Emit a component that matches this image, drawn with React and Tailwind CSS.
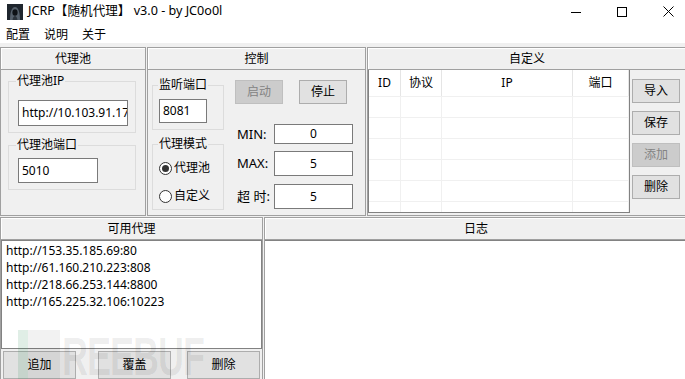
import React from "react";

const FONT = "font-['Noto_Sans','Noto_Sans_CJK_SC',sans-serif]";

function Btn({ children, disabled, className = "" }) {
  return (
    <div
      className={`flex items-center justify-center border text-[12px] leading-none ${
        disabled
          ? "bg-[#cccccc] border-[#bfbfbf] text-[#838383]"
          : "bg-[#e1e1e1] border-[#adadad] text-black"
      } ${className}`}
    >
      {children}
    </div>
  );
}

function Header({ title }) {
  return (
    <div className="h-[22px] shrink-0 border-b border-[#a0a0a0] shadow-[inset_1px_1px_0_#ffffff] flex items-center justify-center text-[12px] leading-none">
      {title}
    </div>
  );
}

function Field({ value, center, className = "" }) {
  return (
    <div
      className={`bg-white border border-[#7a7a7a] flex items-center overflow-hidden whitespace-nowrap text-[12px] leading-none ${
        center ? "justify-center" : "pl-[3px]"
      } ${className}`}
    >
      {value}
    </div>
  );
}

function Radio({ checked, label }) {
  return (
    <div className="h-[20px] flex items-center">
      <span className="w-[13px] h-[13px] rounded-full border border-[#333333] bg-white flex items-center justify-center">
        {checked && <span className="w-[7px] h-[7px] rounded-full bg-[#333333]" />}
      </span>
      <span className="ml-[2px] text-[12px] leading-none">{label}</span>
    </div>
  );
}

function Logo() {
  return (
    <svg width="16" height="16" viewBox="0 0 16 16" className="ml-[7px] shrink-0">
      <rect width="16" height="16" fill="#1f262e" />
      <path d="M3 16 C3 9 4.5 3 8 3 C11.5 3 13 9 13 16 Z" fill="#55606b" />
      <ellipse cx="8" cy="8.5" rx="2.6" ry="3.2" fill="#0e1216" />
      <path d="M5.5 16 C6 13 7 12 8 12 C9 12 10 13 10.5 16 Z" fill="#2c343c" />
    </svg>
  );
}

const proxies = [
  "http://153.35.185.69:80",
  "http://61.160.210.223:808",
  "http://218.66.253.144:8800",
  "http://165.225.32.106:10223",
];

const cols = ["ID", "协议", "IP", "端口"];

export default function App() {
  return (
    <div className={`relative w-[685px] h-[379px] overflow-hidden bg-white text-black ${FONT}`}>
      {/* title bar */}
      <div className="h-[23px] flex items-center">
        <Logo />
        <span className="ml-[5px] text-[12.6px] leading-none whitespace-nowrap">
          JCRP【随机代理】 v3.0 - by JC0o0l
        </span>
        <div className="ml-auto -mr-[6px] flex shrink-0">
          <div className="w-[46px] h-[23px] flex items-center justify-center">
            <svg width="10" height="10" viewBox="0 0 10 10">
              <path d="M0 5.5H10" stroke="#000" strokeWidth="1" />
            </svg>
          </div>
          <div className="w-[46px] h-[23px] flex items-center justify-center">
            <svg width="10" height="10" viewBox="0 0 10 10">
              <rect x="0.5" y="0.5" width="9" height="9" fill="none" stroke="#000" strokeWidth="1" />
            </svg>
          </div>
          <div className="w-[46px] h-[23px] flex items-center justify-center">
            <svg width="11" height="11" viewBox="0 0 11 11">
              <path d="M0.5 0.5L10.5 10.5M10.5 0.5L0.5 10.5" stroke="#000" strokeWidth="1" />
            </svg>
          </div>
        </div>
      </div>

      {/* menu */}
      <div className="h-[20px] pt-[4px] flex items-center gap-[14px] pl-[6px] text-[12px] leading-none">
        <span>配置</span>
        <span>说明</span>
        <span>关于</span>
      </div>

      {/* main */}
      <div className="bg-[#f0f0f0] h-[336px] pt-[4px]">
        <div className="h-[169px] flex gap-[1px]">
          {/* 代理池 */}
          <div className="w-[146px] shrink-0 border border-[#a0a0a0] flex flex-col">
            <Header title="代理池" />
            <fieldset className="ml-[7px] mt-[4px] w-[128px] border border-[#dcdcdc] pl-[9px] pt-[12px] pb-[6px]">
              <legend className="-ml-[2px] px-[1px] text-[12px] leading-[14px]">代理池IP</legend>
              <Field value="http://10.103.91.175" className="w-[110px] h-[26px]" />
            </fieldset>
            <fieldset className="ml-[7px] mt-[5px] w-[128px] border border-[#dcdcdc] pl-[9px] pt-[6px] pb-[6px]">
              <legend className="-ml-[2px] px-[1px] text-[12px] leading-[14px]">代理池端口</legend>
              <Field value="5010" className="w-[80px] h-[25px]" />
            </fieldset>
          </div>

          {/* 控制 */}
          <div className="w-[219px] shrink-0 border border-[#a0a0a0] flex flex-col">
            <Header title="控制" />
            <div className="flex">
              <div className="ml-[4px] w-[72px] flex flex-col">
                <fieldset className="mt-[8px] border border-[#dcdcdc] pl-[6px] pt-[7px] pb-[6px]">
                  <legend className="-ml-[1px] px-[1px] text-[12px] leading-[14px]">监听端口</legend>
                  <Field value="8081" className="w-[48px] h-[24px]" />
                </fieldset>
                <fieldset className="mt-[7px] border border-[#dcdcdc] pl-[6px] pt-[7px] pb-[3px] flex flex-col gap-[8px]">
                  <legend className="-ml-[1px] px-[1px] text-[12px] leading-[14px]">代理模式</legend>
                  <Radio checked label="代理池" />
                  <Radio label="自定义" />
                </fieldset>
              </div>
              <div className="ml-[11px] w-[118px] flex flex-col">
                <div className="mt-[10px] flex gap-[16px]">
                  <Btn disabled className="w-[48px] h-[24px]">启动</Btn>
                  <Btn className="w-[48px] h-[24px]">停止</Btn>
                </div>
                <div className="mt-[20px] flex items-center h-[20px]">
                  <span className="w-[39px] pl-[2px] text-[13px] leading-none">MIN:</span>
                  <Field value="0" center className="w-[79px] h-[20px]" />
                </div>
                <div className="mt-[7px] flex items-center h-[25px]">
                  <span className="w-[39px] pl-[2px] text-[13px] leading-none">MAX:</span>
                  <Field value="5" center className="w-[79px] h-[25px]" />
                </div>
                <div className="mt-[8px] flex items-center h-[25px]">
                  <span className="w-[39px] pl-[2px] text-[13px] leading-none">超 时:</span>
                  <Field value="5" center className="w-[79px] h-[25px]" />
                </div>
              </div>
            </div>
          </div>

          {/* 自定义 */}
          <div className="w-[320px] shrink-0 border border-[#a0a0a0] flex flex-col">
            <Header title="自定义" />
            <div className="flex">
              <div className="w-[262px] h-[143px] bg-white border-x border-b border-[#828282] overflow-hidden">
                <div className="grid grid-cols-[32px_41px_131px_56px] h-[26px] text-[12px] leading-none">
                  {cols.map((c) => (
                    <div key={c} className="flex items-center justify-center border-r border-[#e5e5e5]">
                      {c}
                    </div>
                  ))}
                </div>
                {[0, 1, 2, 3, 4, 5].map((r) => (
                  <div key={r} className="grid grid-cols-[32px_41px_131px_56px] h-[21px] border-t border-[#f0f0f0]">
                    <div className="border-r border-[#f0f0f0]" />
                    <div className="border-r border-[#f0f0f0]" />
                    <div className="border-r border-[#f0f0f0]" />
                    <div className="border-r border-[#f0f0f0]" />
                  </div>
                ))}
              </div>
              <div className="ml-[2px] mt-[9px] flex flex-col gap-[8px]">
                <Btn className="w-[48px] h-[24px]">导入</Btn>
                <Btn className="w-[48px] h-[24px]">保存</Btn>
                <Btn disabled className="w-[48px] h-[24px]">添加</Btn>
                <Btn className="w-[48px] h-[24px]">删除</Btn>
              </div>
            </div>
          </div>
        </div>

        <div className="mt-[1px] h-[170px] flex gap-[1px]">
          {/* 可用代理 */}
          <div className="w-[263px] shrink-0 border border-[#a0a0a0] flex flex-col">
            <Header title="可用代理" />
            <div className="h-[109px] bg-white border border-[#828282] pl-[4px] pt-[1px] text-[12px] leading-[17px]">
              {proxies.map((p) => (
                <div key={p}>{p}</div>
              ))}
            </div>
            <div className="mt-[2px] flex">
              <Btn className="ml-[2px] w-[73px] h-[28px]">追加</Btn>
              <Btn className="ml-[22px] w-[73px] h-[28px]">覆盖</Btn>
              <Btn className="ml-[16px] w-[73px] h-[28px]">删除</Btn>
            </div>
          </div>

          {/* 日志 */}
          <div className="w-[424px] shrink-0 border border-[#a0a0a0] flex flex-col">
            <Header title="日志" />
            <div className="flex-1 bg-white border-t border-[#828282]" />
          </div>
        </div>
      </div>

      {/* watermark */}
      <div className="pointer-events-none absolute left-[18px] top-[330px] flex items-start">
        <div className="w-[10px] h-[52px] bg-[#2e8b57]/15" />
        <div className="w-[32px] h-[52px] bg-black/[0.05]" />
        <span className="ml-[2px] origin-top scale-y-150 font-['Liberation_Sans',sans-serif] font-bold text-[36px] leading-none tracking-[-1px] text-black/[0.07]">
          REEBUF
        </span>
      </div>
    </div>
  );
}
